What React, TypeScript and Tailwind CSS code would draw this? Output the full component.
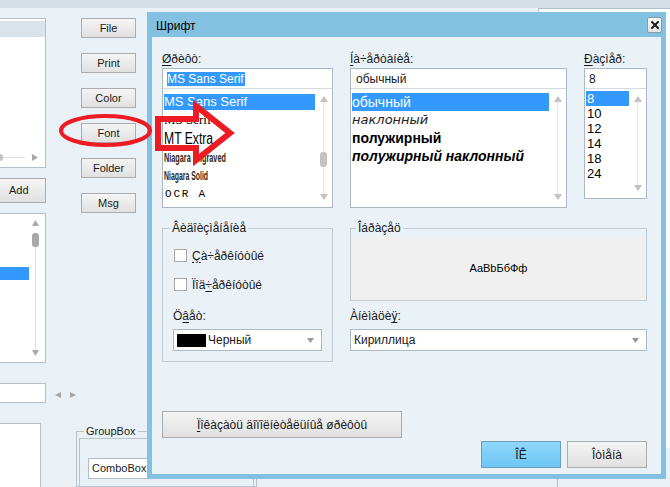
import React from "react";

const sans = "font-['Liberation_Sans',Arial,sans-serif]";

function Tri({ dir, color = "#c2c2c2", w = 9, h = 6 }: { dir: "up" | "down" | "left" | "right"; color?: string; w?: number; h?: number }) {
  const pts =
    dir === "up"
      ? `${w / 2},0 ${w},${h} 0,${h}`
      : dir === "down"
      ? `0,0 ${w},0 ${w / 2},${h}`
      : dir === "left"
      ? `${w},0 ${w},${h} 0,${h / 2}`
      : `0,0 ${w},${h / 2} 0,${h}`;
  return (
    <svg width={w} height={h} viewBox={`0 0 ${w} ${h}`} className="block shrink-0">
      <polygon points={pts} fill={color} />
    </svg>
  );
}

function ScrollTrack({ thumbOffset }: { thumbOffset?: boolean }) {
  return (
    <div className="w-[17px] shrink-0 flex flex-col items-center py-[7px]">
      <Tri dir="up" w={8} h={6} />
      {thumbOffset ? (
        <div className="flex-1 flex flex-col items-center">
          <div className="w-px h-[50px] bg-[#e4e4e4]" />
          <div className="w-[7px] h-[15px] rounded-[3px] bg-[#c3c3c3]" />
          <div className="w-px flex-1 bg-[#e4e4e4]" />
        </div>
      ) : (
        <div className="w-px flex-1 bg-[#e4e4e4]" />
      )}
      <Tri dir="down" w={8} h={6} />
    </div>
  );
}

function WinButton({ children, className = "" }: { children: React.ReactNode; className?: string }) {
  return (
    <div
      className={`flex items-center justify-center border border-[#acacac] bg-linear-to-b from-[#f4f4f4] to-[#e1e1e1] ${className}`}
    >
      {children}
    </div>
  );
}

function Combo({ children, className = "" }: { children: React.ReactNode; className?: string }) {
  return (
    <div className={`h-[22px] border border-[#abb9c3] bg-white flex items-center ${className}`}>
      <div className="flex-1 flex items-center min-w-0">{children}</div>
      <div className="mr-[7px]">
        <Tri dir="down" color="#9a9a9a" w={7} h={5} />
      </div>
    </div>
  );
}

function Checkbox({ children }: { children: React.ReactNode }) {
  return (
    <div className="h-[13px] flex items-center gap-[5px] ml-px">
      <div className="w-[13px] h-[13px] border border-[#a9a9a9] bg-white shrink-0" />
      <span className="leading-[16px]">{children}</span>
    </div>
  );
}

function Background() {
  return (
    <>
      <div className="h-[8px] bg-[#d4dee6]" />
      <div className="flex h-[479px] text-[11px]">
        {/* left column of list boxes */}
        <div className="w-[46px] shrink-0 flex flex-col pt-[10px]">
          <div className="h-[150px] bg-white border-y border-r border-[#b3c0c9] flex flex-col">
            <div className="h-[16px] mt-[2px] bg-[#dae3ea]" />
            <div className="flex-1" />
            <div className="h-[7px] mb-[6px] flex items-center">
              <div className="w-[3px] h-[7px] rounded-r-[3px] bg-[#c4c4c4]" />
              <div className="w-[22px] h-px bg-[#dedede]" />
              <div className="ml-[7px]">
                <Tri dir="right" color="#a8a8a8" w={6} h={7} />
              </div>
            </div>
          </div>
          <div className="mt-[10px] h-[25px] border-y border-r border-[#acacac] bg-linear-to-b from-[#f4f4f4] to-[#e1e1e1] flex items-center pl-[9px]">
            Add
          </div>
          <div className="mt-[10px] h-[150px] bg-white border-y border-r border-[#b3c0c9] flex">
            <div className="flex-1 pt-[53px]">
              <div className="h-[13px] bg-[#3399ff]" />
            </div>
            <div className="w-[13px] mr-[3px] flex flex-col items-center pt-[6px] pb-[6px]">
              <Tri dir="up" color="#a9a9a9" w={7} h={6} />
              <div className="mt-[7px] w-[7px] h-[14px] rounded-[3px] bg-[#a9a9a9]" />
              <div className="w-px flex-1 bg-[#dcdcdc]" />
              <Tri dir="down" color="#a9a9a9" w={7} h={6} />
            </div>
          </div>
          <div className="mt-[20px] h-[20px] bg-white border-y border-r border-[#b3c0c9]" />
          <div className="mt-[20px] w-[41px] flex-1 bg-white border-t border-r border-[#b3c0c9]" />
        </div>

        {/* buttons and group box */}
        <div className="flex-1 flex flex-col">
          <div className="ml-[35px] mt-[10px] flex flex-col gap-[15px]">
            {["File", "Print", "Color", "Font", "Folder", "Msg"].map((t) => (
              <WinButton key={t} className="w-[55px] h-[20px]">
                {t}
              </WinButton>
            ))}
          </div>
          <div className="mt-[179px] ml-[9px] flex gap-[9px]">
            <Tri dir="left" color="#a6a6a6" w={6} h={6} />
            <Tri dir="right" color="#a6a6a6" w={6} h={6} />
          </div>
          <fieldset className="mt-[26px] ml-[30px] w-[181px] flex-1 border border-[#b9c5ce] p-0 m-0 min-w-0">
            <legend className="ml-[7px] px-[2px] leading-[14px] text-[11px] text-[#222]">GroupBox</legend>
            <div className="mx-[2px] h-full border-l border-t border-r border-[#b9c5ce] pl-[8px] pt-[19px]">
              <div className="h-[21px] w-[120px] bg-white border border-[#b0bcc5] flex items-center pl-[3px]">
                ComboBox
              </div>
            </div>
          </fieldset>
        </div>

        {/* panel on the right */}
        <div className="w-[132px] shrink-0 flex flex-col">
          <div className="h-[440px] bg-white border-l border-t border-[#b4c0c9]" />
          <div className="ml-[19px] flex-1 border-l border-[#b4c0c9]" />
        </div>
      </div>
    </>
  );
}

function FontDialog() {
  return (
    <div className="absolute left-[147px] top-[12px] w-[519px] h-[467px] bg-[#83c1e3] flex flex-col px-[5px] pb-[5px] text-[12px] text-[#1a1a1a]">
      {/* title bar */}
      <div className="h-[25px] flex items-center justify-between pl-[4px]">
        <span className="pt-[3px] text-black">Шрифт</span>
        <div className="-mr-px w-[15px] h-[16px] rounded-[2px] border border-[#8d9ba6] bg-linear-to-b from-[#fbfbfb] to-[#e2e2e2] flex items-center justify-center">
          <svg width="8" height="8" viewBox="0 0 8 8">
            <path d="M1 1 L7 7 M7 1 L1 7" stroke="#1e1e1e" strokeWidth="2" strokeLinecap="square" />
          </svg>
        </div>
      </div>

      {/* client area */}
      <div className="flex-1 bg-[#eaf2f8] flex flex-col pl-[10px] pr-[14px] pt-[14px] pb-[6px]">
        <div className="flex gap-[17px] items-start">
          {/* font face */}
          <div className="w-[171px] flex flex-col">
            <div className="h-[16px] leading-[16px] mb-px">
              <span className="underline underline-offset-2">Ø</span>ðèôò:
            </div>
            <div className="h-[140px] border border-[#abb8c2] bg-white flex flex-col">
              <div className="h-[20px] border-b border-[#d3dbe1] flex items-center pl-[4px]">
                <span className="bg-[#3399ff] text-white leading-[14px] pr-px">MS Sans Serif</span>
              </div>
              <div className="flex-1 flex">
                <div className="flex-1 ml-px pt-[5px] flex flex-col text-black">
                  <div className="h-[16px] bg-[#3399ff] text-white text-[13px] leading-[16px]">MS Sans Serif</div>
                  <div className="h-[19px] flex items-center text-[13px] font-['Liberation_Serif',serif]">MS Serif</div>
                  <div className="h-[20px] flex items-center">
                    <span className="inline-block text-[16px] scale-x-[0.76] origin-left whitespace-nowrap">MT Extra</span>
                  </div>
                  <div className="h-[17px] flex items-center">
                    <span className="inline-block text-[13px] font-bold scale-x-[0.56] origin-left whitespace-nowrap text-[#2e2614]">
                      Niagara Engraved
                    </span>
                  </div>
                  <div className="h-[19px] flex items-center">
                    <span className="inline-block text-[13px] font-bold scale-x-[0.53] origin-left whitespace-nowrap text-[#2e2614]">
                      Niagara Solid
                    </span>
                  </div>
                  <div className="h-[19px] flex items-center pl-px text-[11px] tracking-[1.8px] font-['Liberation_Mono',monospace] whitespace-pre">
                    OCR A
                  </div>
                </div>
                <ScrollTrack thumbOffset />
              </div>
            </div>
          </div>

          {/* font style */}
          <div className="w-[217px] flex flex-col">
            <div className="h-[16px] leading-[16px] mb-px">
              <span className="underline underline-offset-2">Í</span>à÷åðòàíèå:
            </div>
            <div className="h-[140px] border border-[#abb8c2] bg-white flex flex-col">
              <div className="h-[20px] border-b border-[#d3dbe1] flex items-center pl-[5px]">обычный</div>
              <div className="flex-1 flex">
                <div className="flex-1 ml-px pt-[4px] flex flex-col text-[14px] text-black">
                  <div className="h-[18px] bg-[#3399ff] text-white leading-[18px]">обычный</div>
                  <div className="h-[18px] leading-[18px] italic font-extralight font-['DejaVu_Sans',sans-serif] text-[13px] text-[#222]">
                    наклонный
                  </div>
                  <div className="h-[18px] leading-[18px] font-bold">полужирный</div>
                  <div className="h-[18px] leading-[18px] font-bold italic">полужирный наклонный</div>
                </div>
                <ScrollTrack />
              </div>
            </div>
          </div>

          {/* font size */}
          <div className="w-[63px] flex flex-col">
            <div className="h-[16px] leading-[16px] mb-px">
              <span className="underline underline-offset-2">Ð</span>àçìåð:
            </div>
            <div className="h-[131px] border border-[#abb8c2] bg-white flex flex-col">
              <div className="h-[20px] border-b border-[#d3dbe1] flex items-center pl-[4px]">8</div>
              <div className="flex-1 flex">
                <div className="flex-1 ml-px pt-[2px] flex flex-col text-[13px] text-black">
                  {["8", "10", "12", "14", "18", "24"].map((s, i) => (
                    <div
                      key={s}
                      className={`h-[15px] leading-[15px] pl-px ${i === 0 ? "bg-[#3399ff] text-white" : ""}`}
                    >
                      {s}
                    </div>
                  ))}
                </div>
                <ScrollTrack />
              </div>
            </div>
          </div>
        </div>

        <div className="mt-[13px] flex gap-[17px] items-start">
          {/* effects */}
          <fieldset className="w-[171px] border border-[#bfccd5] p-0 m-0 min-w-0">
            <legend className="ml-[7px] px-[2px] leading-[14px]">Âèäîèçìåíåíèå</legend>
            <div className="pl-[10px] pr-[10px] pt-[14px] pb-[10px] flex flex-col">
              <Checkbox>
                <span className="underline underline-offset-2">Ç</span>à÷åðêíóòûé
              </Checkbox>
              <div className="mt-[16px]">
                <Checkbox>
                  Ïîä<span className="underline underline-offset-2">÷</span>åðêíóòûé
                </Checkbox>
              </div>
              <div className="mt-[17px] h-[16px] leading-[16px]">
                Ö<span className="underline underline-offset-2">â</span>åò:
              </div>
              <Combo className="mt-[5px] w-[149px]">
                <div className="ml-[3px] w-[29px] h-[13px] bg-black" />
                <span className="ml-[2px]">Черный</span>
              </Combo>
            </div>
          </fieldset>

          {/* sample and script */}
          <div className="w-[297px] flex flex-col">
            <fieldset className="border border-[#bfccd5] p-0 m-0 min-w-0">
              <legend className="ml-[5px] px-[2px] leading-[14px]">Îáðàçåö</legend>
              <div className="mt-[2px] h-[63px] bg-[#f0f0f0] flex items-center justify-center text-[11px] text-black">
                AaBbБбФф
              </div>
            </fieldset>
            <div className="mt-[7px] h-[16px] leading-[16px]">
              Àíèìàöè<span className="underline underline-offset-2">ÿ</span>:
            </div>
            <Combo className="mt-[5px]">
              <span className="ml-[3px]">Кириллица</span>
            </Combo>
          </div>
        </div>

        <div className="mt-auto flex flex-col">
          <WinButton className="w-[240px] h-[27px]">
            <span>
              <span className="underline underline-offset-2">Ï</span>îêàçàòü äîïîëíèòåëüíûå øðèôòû
            </span>
          </WinButton>
          <div className="mt-[3px] flex justify-end gap-[6px]">
            <div className="w-[80px] h-[27px] border border-[#6f9cbd] bg-linear-to-b from-[#8fd8fc] to-[#6cc5f4] flex items-center justify-center">
              ÎÊ
            </div>
            <WinButton className="w-[80px] h-[27px]">Îòìåíà</WinButton>
          </div>
        </div>
      </div>
    </div>
  );
}

function Annotations() {
  return (
    <svg className="absolute inset-0 pointer-events-none" width="670" height="487" viewBox="0 0 670 487">
      <ellipse cx="105.5" cy="130.5" rx="44.5" ry="14.5" fill="none" stroke="#ed1c24" strokeWidth="4" />
      <polygon
        points="158,119 196,119 196,106 230,133 196,160 196,148 158,148"
        fill="none"
        stroke="#ed1c24"
        strokeWidth="6"
        strokeLinejoin="miter"
      />
    </svg>
  );
}

export default function App() {
  return (
    <div className={`relative w-[670px] h-[487px] overflow-hidden bg-[#e9f1f7] text-[#1b1b1b] ${sans}`}>
      <Background />
      <FontDialog />
      <Annotations />
    </div>
  );
}
